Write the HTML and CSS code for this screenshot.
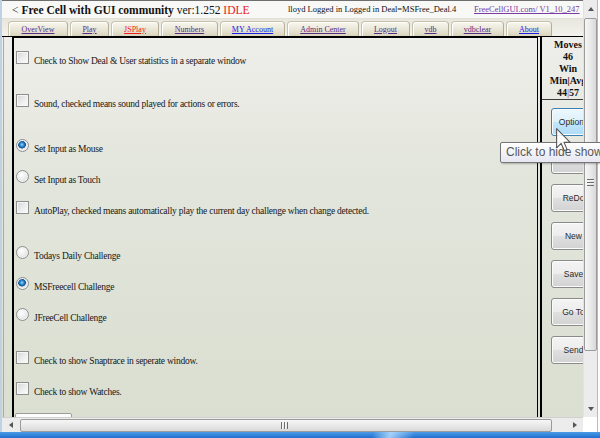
FILE: index.html
```html
<!DOCTYPE html>
<html>
<head>
<meta charset="utf-8">
<title>Free Cell with GUI community</title>
<link rel="stylesheet" href="styles.css">
</head>
<body>
<div class="screen">
  <div class="upper">
    <div class="viewport">
      <div class="header">
        <div class="title"><span class="back">&lt;</span> <b>Free Cell with GUI community</b> ver:1.252 <span class="idle">IDLE</span></div>
        <div class="user">lloyd Logged in Logged in Deal=MSFree_Deal.4</div>
        <a class="site" href="#">FreeCellGUI.com/ V1_10_247</a>
      </div>
      <nav class="tabs">
        <a class="tab visited t-overview" href="#">OverView</a>
        <a class="tab visited t-play" href="#">Play</a>
        <a class="tab active t-jsplay" href="#">JSPlay</a>
        <a class="tab visited t-numbers" href="#">Numbers</a>
        <a class="tab fresh t-account" href="#">MY Account</a>
        <a class="tab visited t-admin" href="#">Admin Center</a>
        <a class="tab visited t-logout" href="#">Logout</a>
        <a class="tab visited t-vdb" href="#">vdb</a>
        <a class="tab visited t-vdbclear" href="#">vdbclear</a>
        <a class="tab fresh t-about" href="#">About</a>
      </nav>
      <div class="main">
        <div class="outer">
          <div class="panel">
            <label class="opt first"><input type="checkbox"><span>Check to Show Deal &amp; User statistics in a separate window</span></label>
            <label class="opt gap-s"><input type="checkbox"><span>Sound, checked means sound played for actions or errors.</span></label>
            <label class="opt gap-l"><input type="radio" name="input" checked><span>Set Input as Mouse</span></label>
            <label class="opt"><input type="radio" name="input"><span>Set Input as Touch</span></label>
            <label class="opt"><input type="checkbox"><span>AutoPlay, checked means automatically play the current day challenge when change detected.</span></label>
            <label class="opt gap-l"><input type="radio" name="chal"><span>Todays Daily Challenge</span></label>
            <label class="opt"><input type="radio" name="chal" checked><span>MSFreecell Challenge</span></label>
            <label class="opt"><input type="radio" name="chal"><span>JFreeCell Challenge</span></label>
            <label class="opt gap-s"><input type="checkbox"><span>Check to show Snaptrace in seperate window.</span></label>
            <label class="opt"><input type="checkbox"><span>Check to show Watches.</span></label>
            <div class="opt"><button class="help">Help Info</button></div>
          </div>
        </div>
        <div class="side">
          <div class="stats">
            <div>Moves</div>
            <div>46</div>
            <div>Win</div>
            <div>Min|Avg</div>
            <div>44<span class="sep">|</span>57</div>
          </div>
          <div class="btns">
            <button class="btn hover">Options</button>
            <button class="btn">Undo</button>
            <button class="btn">ReDo</button>
            <button class="btn">New</button>
            <button class="btn">Save</button>
            <button class="btn">Go To</button>
            <button class="btn">Send</button>
          </div>
        </div>
      </div>
    </div>
    <div class="vscroll">
      <div class="sb-btn"><span class="tri-up"></span></div>
      <div class="vthumb"><span class="vgrip"></span></div>
      <div class="sb-fill"></div>
      <div class="sb-btn"><span class="tri-down"></span></div>
    </div>
    <div class="edge"></div>
  </div>
  <div class="hrow">
    <div class="hscroll">
      <div class="hs-btn"><span class="tri-left"></span></div>
      <div class="hthumb"><span class="hgrip"></span></div>
      <div class="hs-fill"></div>
      <div class="hs-btn"><span class="tri-right"></span></div>
    </div>
    <div class="corner"></div>
    <div class="edge"></div>
  </div>
  <div class="taskbar"></div>

  <div class="tooltip">Click to hide show options</div>
  <svg class="cursor" width="15" height="24" viewBox="0 0 12.5 20" aria-hidden="true">
    <path d="M0.5 0.5 L0.5 16.5 L4.3 12.9 L7 19 L9.3 18 L6.7 12 L11.8 12 Z" fill="#fff" fill-opacity="0.85" stroke="#555" stroke-width="0.9" stroke-linejoin="round"/>
  </svg>
</div>
</body>
</html>
```
FILE: styles.css
```css
* { box-sizing: border-box; }
html, body { margin: 0; padding: 0; }
body {
  width: 600px;
  height: 438px;
  overflow: hidden;
  background: #fff;
  font-family: "Liberation Serif", "Times New Roman", serif;
  color: #1a1a1a;
}
.screen {
  position: relative;
  width: 600px;
  height: 438px;
  display: flex;
  flex-direction: column;
  overflow: hidden;
}

/* ---------- window areas ---------- */
.upper {
  display: flex;
  height: 417px;
  border-left: 2px solid #bfd1e3;
}
.viewport {
  width: 581px;
  flex-shrink: 0;
  overflow: hidden;
  display: flex;
  flex-direction: column;
  background: linear-gradient(#f1f1ee, #e2e5db 45%, #dadfd1);
}
.edge {
  width: 3px;
  flex-shrink: 0;
  background: #fff;
  border-left: 1px solid #b9b9b9;
}

/* ---------- header ---------- */
.header {
  height: 19px;
  flex-shrink: 0;
  display: flex;
  align-items: center;
  padding-left: 10px;
  white-space: nowrap;
  background: #f8f8f6;
  border-top: 1px solid #6e6e6e;
  border-bottom: 1px solid #e2e0d6;
}
.title {
  width: 276px;
  flex-shrink: 0;
  font-size: 11.5px;
  color: #111;
}
.title b { font-weight: bold; }
.idle { color: #e8201c; }
.user {
  width: 186px;
  flex-shrink: 0;
  font-size: 8.5px;
  color: #111;
  padding-bottom: 2px;
}
.site {
  font-size: 8.5px;
  color: #7a3ca4;
  text-decoration: underline;
  padding-bottom: 2px;
}

/* ---------- tabs ---------- */
.tabs {
  height: 18px;
  flex-shrink: 0;
  display: flex;
  gap: 2px;
  padding: 2px 0 0 6px;
  background: linear-gradient(#e7e7df, #f3f2ec);
  border-bottom: 1px solid #000;
}
.tab {
  height: 15px;
  display: flex;
  align-items: center;
  justify-content: center;
  font-size: 8px;
  text-decoration: underline;
  white-space: nowrap;
  border: 1px solid #c6c2ac;
  border-bottom: none;
  border-right-color: #b3ae96;
  border-radius: 4px 4px 0 0;
  background: linear-gradient(#f8f7f0, #e9e6d6 55%, #d9d4bc);
  box-shadow: inset 1px 1px 0 #fffefa;
}
.tab.visited { color: #5c2d86; }
.tab.active { color: #f01c1c; }
.tab.fresh { color: #1c1ce8; }
.t-overview { width: 60px; }
.t-play { width: 39px; }
.t-jsplay { width: 48px; }
.t-numbers { width: 57px; }
.t-account { width: 65px; }
.t-admin { width: 72px; }
.t-logout { width: 49px; }
.t-vdb { width: 37px; }
.t-vdbclear { width: 53px; }
.t-about { width: 46px; }

/* ---------- main ---------- */
.main {
  flex: 1;
  min-height: 0;
  display: flex;
}
.outer {
  width: 535px;
  flex-shrink: 0;
  margin-left: 1px;
  border-left: 1px solid #a9a9a9;
  padding-left: 8px;
  display: flex;
}
.panel {
  flex: 1;
  display: flex;
  flex-direction: column;
  border-left: 2px solid #000;
  border-right: 1px solid #000;
  border-top: 1px solid #000;
  padding-left: 1px;
}
.opt {
  display: flex;
  align-items: flex-end;
  height: 13px;
  margin-top: 18px;
  font-size: 9.5px;
  letter-spacing: -0.25px;
  line-height: 11px;
  white-space: nowrap;
  color: #161616;
}
.opt.first { margin-top: 13px; }
.opt.gap-s { margin-top: 30px; }
.opt.gap-l { margin-top: 32px; }
.opt span { margin-bottom: -3px; }

.opt input {
  appearance: none;
  -webkit-appearance: none;
  flex-shrink: 0;
  width: 13px;
  height: 13px;
  margin: 0 5px 0 1px;
  border: 1px solid #8e8f8f;
  background: linear-gradient(135deg, #d6d6d6, #eeeeee 55%, #fbfbfb);
  box-shadow: inset 0 0 0 1px #f6f6f6;
}
.opt input[type="radio"] {
  border-radius: 50%;
  background: radial-gradient(circle at 40% 35%, #ffffff 0, #eeeeee 45%, #d2d2d2 100%);
  box-shadow: inset 0 0 0 1px #f2f2f2;
}
.opt input[type="radio"]:checked {
  background:
    radial-gradient(circle at 45% 42%, #a8defc 0, #3a96dc 1.6px, #0b4f92 3.6px, rgba(11,79,146,0) 4.2px),
    radial-gradient(circle at 40% 35%, #ffffff 0, #eeeeee 45%, #d2d2d2 100%);
}
.help {
  flex-shrink: 0;
  width: 57px;
  height: 20px;
  margin: 0 0 -7px 0;
  padding: 1px 4px 0;
  align-self: flex-start;
  text-align: left;
  font: 9px "Liberation Serif", serif;
  color: #c0449a;
  background: #fdfdfd;
  border: 1px solid #9c9c9c;
  border-radius: 2px;
}

/* ---------- side ---------- */
.side {
  width: 54px;
  flex-shrink: 0;
  margin-left: 2px;
  border-left: 2px solid #000;
  display: flex;
  flex-direction: column;
}
.stats {
  height: 63px;
  padding-top: 2px;
  border-bottom: 1px solid #3a3a3a;
  text-align: center;
  font-weight: bold;
  font-size: 10px;
  line-height: 12px;
  white-space: nowrap;
  overflow: hidden;
  color: #111;
}
.sep { color: #b0507a; }
.btns {
  display: flex;
  flex-direction: column;
  gap: 10px;
  padding: 8px 0 0 9px;
}
.btn {
  width: 45px;
  height: 28px;
  flex-shrink: 0;
  padding: 0;
  font: 8.5px "Liberation Sans", Arial, sans-serif;
  color: #2a2a2a;
  border: 1px solid #8a8a8a;
  border-radius: 3px;
  background: linear-gradient(#f4f4f4 0, #ececec 50%, #e0e0e0 50%, #d2d2d2 100%);
  box-shadow: inset 0 0 0 1px #fbfbfb;
}
.btn.hover {
  border-color: #3c7fb1;
  background: linear-gradient(#ecf7fd 0, #dcf1fc 50%, #c2e7fc 50%, #afdcf6 100%);
}

/* ---------- scrollbars ---------- */
.vscroll {
  width: 14px;
  flex-shrink: 0;
  display: flex;
  flex-direction: column;
  align-items: center;
  background: #ececec;
  border-left: 1px solid #e2e2e2;
}
.sb-btn {
  height: 17px;
  width: 100%;
  flex-shrink: 0;
  display: flex;
  align-items: center;
  justify-content: center;
}
.tri-up, .tri-down, .tri-left, .tri-right { width: 0; height: 0; border-style: solid; }
.tri-up { border-width: 0 3.5px 4px; border-color: transparent transparent #555; }
.tri-down { border-width: 4px 3.5px 0; border-color: #555 transparent transparent; }
.tri-left { border-width: 3.5px 4px 3.5px 0; border-color: transparent #555 transparent transparent; }
.tri-right { border-width: 3.5px 0 3.5px 4px; border-color: transparent transparent transparent #555; }
.vthumb {
  width: 13px;
  height: 333px;
  flex-shrink: 0;
  margin-top: 1px;
  border: 1px solid #9b9b9b;
  border-radius: 2px;
  background: linear-gradient(90deg, #f6f6f6, #e9e9e9 50%, #d9d9d9);
  display: flex;
  justify-content: center;
  padding-top: 160px;
}
.vgrip {
  width: 7px;
  height: 7px;
  background: repeating-linear-gradient(#6d6d6d 0 1px, #f4f4f4 1px 2px, transparent 2px 3px);
}
.sb-fill { flex: 1; }

.hrow {
  display: flex;
  height: 15px;
  flex-shrink: 0;
  border-left: 2px solid #bfd1e3;
}
.hscroll {
  width: 581px;
  flex-shrink: 0;
  display: flex;
  align-items: center;
  background: #ececec;
  border-top: 1px solid #d0d0d0;
}
.hs-btn {
  width: 17px;
  height: 100%;
  flex-shrink: 0;
  display: flex;
  align-items: center;
  justify-content: center;
}
.hs-btn:first-child { width: 17px; }
.hthumb {
  width: 532px;
  height: 13px;
  flex-shrink: 0;
  margin-left: 1px;
  border: 1px solid #9b9b9b;
  border-radius: 2px;
  background: linear-gradient(#f6f6f6, #e9e9e9 50%, #d9d9d9);
  display: flex;
  align-items: center;
  padding-left: 260px;
}
.hgrip {
  width: 7px;
  height: 7px;
  background: repeating-linear-gradient(90deg, #6d6d6d 0 1px, #f4f4f4 1px 2px, transparent 2px 3px);
}
.hs-fill { flex: 1; }
.corner {
  width: 14px;
  flex-shrink: 0;
  background: #fff;
}

.taskbar {
  flex: 1;
  background:
    linear-gradient(112deg, rgba(255,255,255,0) 62%, rgba(190,225,255,0.8) 65%, rgba(255,255,255,0) 69%),
    linear-gradient(#4b9ae6, #1f70cf);
}

/* ---------- overlays ---------- */
.tooltip {
  position: absolute;
  left: 500px;
  top: 142px;
  width: 120px;
  height: 21px;
  padding-left: 5px;
  font: 12px/19px "Liberation Sans", Arial, sans-serif;
  color: #575757;
  white-space: nowrap;
  background: linear-gradient(#ffffff, #e6e7f1);
  border: 1px solid #767676;
  border-radius: 2px;
  box-shadow: 1px 1px 2px rgba(0,0,0,0.25);
}
.cursor {
  position: absolute;
  left: 556px;
  top: 128px;
}
```
